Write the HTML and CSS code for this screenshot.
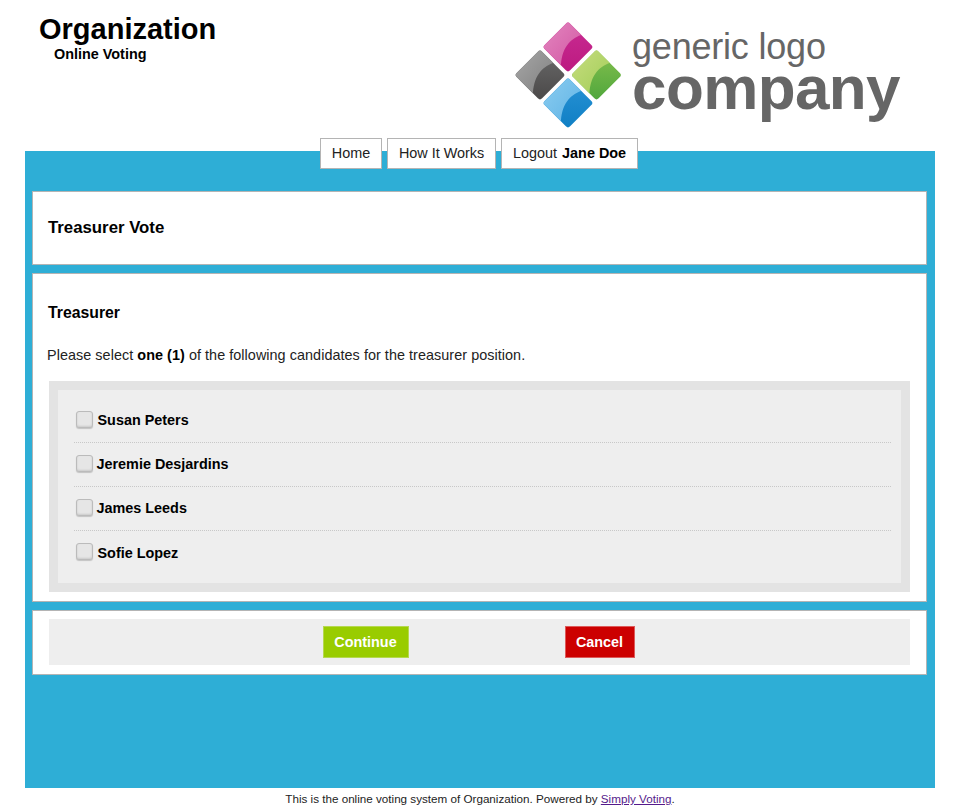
FILE: index.html
```html
<!DOCTYPE html>
<html lang="en">
<head>
<meta charset="utf-8">
<title>Treasurer Vote</title>
<link rel="stylesheet" href="styles.css">
</head>
<body>
<header class="top">
  <div class="org">
    <h1 class="org-name">Organization</h1>
    <p class="org-sub">Online Voting</p>
  </div>
  <div class="logo">
    <svg class="logo-mark" width="108" height="108" viewBox="0 0 108 108" aria-hidden="true">
      <defs>
        <clipPath id="dia"><rect x="-18" y="-18" width="36" height="36" rx="3" transform="rotate(45)"/></clipPath>
        <linearGradient id="dp" x1="0" y1="0" x2="0" y2="1"><stop offset="0" stop-color="#c92c93"/><stop offset="1" stop-color="#bc1a80"/></linearGradient>
        <linearGradient id="lp" x1="0" y1="0" x2="1" y2="1"><stop offset="0" stop-color="#e388c0"/><stop offset="1" stop-color="#d0509f"/></linearGradient>
        <linearGradient id="dk" x1="0" y1="0" x2="0" y2="1"><stop offset="0" stop-color="#6a6a6a"/><stop offset="1" stop-color="#4a4848"/></linearGradient>
        <linearGradient id="lk" x1="0" y1="0" x2="1" y2="1"><stop offset="0" stop-color="#a8a8a8"/><stop offset="1" stop-color="#7a7a7a"/></linearGradient>
        <linearGradient id="dg" x1="0" y1="0" x2="0" y2="1"><stop offset="0" stop-color="#86c04e"/><stop offset="1" stop-color="#4fa63c"/></linearGradient>
        <linearGradient id="lg" x1="0" y1="0" x2="1" y2="1"><stop offset="0" stop-color="#c8dd80"/><stop offset="1" stop-color="#9ccb52"/></linearGradient>
        <linearGradient id="db" x1="0" y1="0" x2="0" y2="1"><stop offset="0" stop-color="#2a93d6"/><stop offset="1" stop-color="#0f7fc4"/></linearGradient>
        <linearGradient id="lb" x1="0" y1="0" x2="1" y2="1"><stop offset="0" stop-color="#8ccdf0"/><stop offset="1" stop-color="#5ab0e4"/></linearGradient>
      </defs>
      <g transform="translate(53 25)" clip-path="url(#dia)">
        <rect x="-26" y="-26" width="52" height="52" fill="url(#dp)"/>
        <path d="M-26 -26H18L13 -12C2 -8 -8 2 -7 24V26H-26Z" fill="url(#lp)"/>
      </g>
      <g transform="translate(25 53)" clip-path="url(#dia)">
        <rect x="-26" y="-26" width="52" height="52" fill="url(#dk)"/>
        <path d="M-26 -26H18L13 -12C2 -8 -8 2 -7 24V26H-26Z" fill="url(#lk)"/>
      </g>
      <g transform="translate(81.5 53)" clip-path="url(#dia)">
        <rect x="-26" y="-26" width="52" height="52" fill="url(#dg)"/>
        <path d="M-26 -26H18L13 -12C2 -8 -8 2 -7 24V26H-26Z" fill="url(#lg)"/>
      </g>
      <g transform="translate(53 81)" clip-path="url(#dia)">
        <rect x="-26" y="-26" width="52" height="52" fill="url(#db)"/>
        <path d="M-26 -26H18L13 -12C2 -8 -8 2 -7 24V26H-26Z" fill="url(#lb)"/>
      </g>
    </svg>
    <div class="logo-text">
      <span class="logo-line1">generic logo</span>
      <span class="logo-line2">company</span>
    </div>
  </div>
</header>
<main class="stage">
  <nav class="tabs">
    <a class="tab" href="#">Home</a>
    <a class="tab" href="#">How It Works</a>
    <a class="tab tab-user" href="#">Logout <b>Jane Doe</b></a>
  </nav>
  <section class="panel panel-title">
    <h2 class="title">Treasurer Vote</h2>
  </section>
  <section class="panel panel-ballot">
    <h3 class="question">Treasurer</h3>
    <p class="prompt">Please select <b>one (1)</b> of the following candidates for the treasurer position.</p>
    <div class="well">
      <ul class="choices">
        <li class="choice"><input class="check" type="checkbox"><label class="name name-a">Susan Peters</label></li>
        <li class="choice"><input class="check" type="checkbox"><label class="name">Jeremie Desjardins</label></li>
        <li class="choice"><input class="check" type="checkbox"><label class="name">James Leeds</label></li>
        <li class="choice"><input class="check" type="checkbox"><label class="name name-a">Sofie Lopez</label></li>
      </ul>
    </div>
  </section>
  <section class="panel panel-actions">
    <div class="actions">
      <a class="btn btn-go" href="#">Continue</a>
      <a class="btn btn-stop" href="#">Cancel</a>
    </div>
  </section>
</main>
<footer class="foot">This is the online voting system of Organization. Powered by <a class="foot-link" href="#">Simply Voting</a>.</footer>
</body>
</html>
```
FILE: styles.css
```css
* { box-sizing: border-box; }
html, body { margin: 0; padding: 0; }
body {
  background: #fff;
  color: #000;
  font-family: "Liberation Sans", Arial, sans-serif;
  font-size: 14px;
  height: 809px;
  overflow: hidden;
}
.top {
  height: 151px;
  display: flex;
  justify-content: space-between;
  padding: 0 51px 0 39px;
}
.org-name {
  margin: 13px 0 0;
  font-size: 29px;
  line-height: 33px;
  font-weight: 700;
}
.org-sub {
  margin: 0 0 0 15px;
  font-size: 14.4px;
  line-height: 16px;
  font-weight: 700;
}
.logo {
  display: flex;
  align-items: flex-start;
  padding-top: 22px;
  color: #666;
}
.logo-mark { margin-right: 9px; flex: none; }
.logo-text {
  display: flex;
  flex-direction: column;
  width: 277px;
}
.logo-line1 {
  font-size: 36px;
  line-height: 40px;
  margin-top: 5px;
  letter-spacing: -0.2px;
}
.logo-line2 {
  font-size: 62px;
  line-height: 44px;
  margin-top: -1px;
  font-weight: 700;
  letter-spacing: -0.6px;
}
.stage {
  display: flow-root;
  margin: 0 25px;
  height: 637px;
  background: #2eaed6;
  padding: 0 8px 0 7px;
}
.tabs {
  display: flex;
  gap: 5px;
  margin: -13px 0 22px;
  padding-left: 288px;
}
.tab {
  height: 31px;
  padding: 0 10.85px 1px;
  display: flex;
  gap: 5px;
  align-items: center;
  background: #fff;
  border: 1px solid #b4b4b4;
  color: #222;
  font-size: 14.4px;
  text-decoration: none;
}
.tab-user { padding: 0 11px 1px; }
.tab b { color: #000; }
.panel {
  background: #fff;
  border: 1px solid #b4b4b4;
  margin-bottom: 8px;
}
.panel-title { height: 74px; padding: 26px 15px 0; }
.title { margin: 0; font-size: 16.8px; line-height: 20px; font-weight: 700; }
.panel-ballot { height: 329px; padding: 30px 16px 0; }
.question { margin: 0 0 0 -1px; font-size: 15.8px; line-height: 18px; font-weight: 700; }
.prompt { margin: 25px 0 0 -2px; font-size: 14.4px; line-height: 17px; color: #222; letter-spacing: .05px; }
.prompt b { color: #000; }
.well {
  margin-top: 17px;
  background: #e3e3e3;
  padding: 9px 9px;
  height: 211px;
}
.choices {
  list-style: none;
  margin: 0;
  height: 193px;
  padding: 9px 10px 0 16px;
  background: #eee;
}
.choice {
  height: 44px;
  padding: 0 0 1px 2px;
  display: flex;
  align-items: center;
  gap: 4px;
  border-bottom: 1px dotted #c8c8c8;
}
.choice:last-child { border-bottom: 0; }
.check {
  appearance: none;
  margin: 0 0 2px;
  width: 16.5px;
  height: 17px;
  flex: none;
  background: #e6e6e6;
  border: 1px solid #bbb;
  border-radius: 3px;
  box-shadow: inset 0 -1px 2px rgba(0,0,0,.12), 0 1px 1px rgba(0,0,0,.18);
}
.name { font-size: 14.4px; font-weight: 700; }
.name-a { margin-left: 1px; }
.panel-actions { height: 65px; padding: 8px 16px 0; }
.actions {
  height: 46px;
  background: #eee;
  display: flex;
  justify-content: center;
  align-items: center;
  gap: 156px;
  padding-right: 2px;
}
.btn {
  height: 32px;
  padding-bottom: 1px;
  display: flex;
  align-items: center;
  justify-content: center;
  color: #fff;
  font-size: 14.4px;
  font-weight: 700;
  text-decoration: none;
}
.btn-go { width: 86px; background: #9c0; border: 1px solid #b5d84f; }
.btn-stop { width: 70px; background: #c00; border: 1px solid #dd5a5a; }
.foot {
  height: 21px;
  font-size: 11.67px;
  line-height: 22px;
  text-align: center;
  color: #222;
}
.foot-link { color: #551a8b; }
```
